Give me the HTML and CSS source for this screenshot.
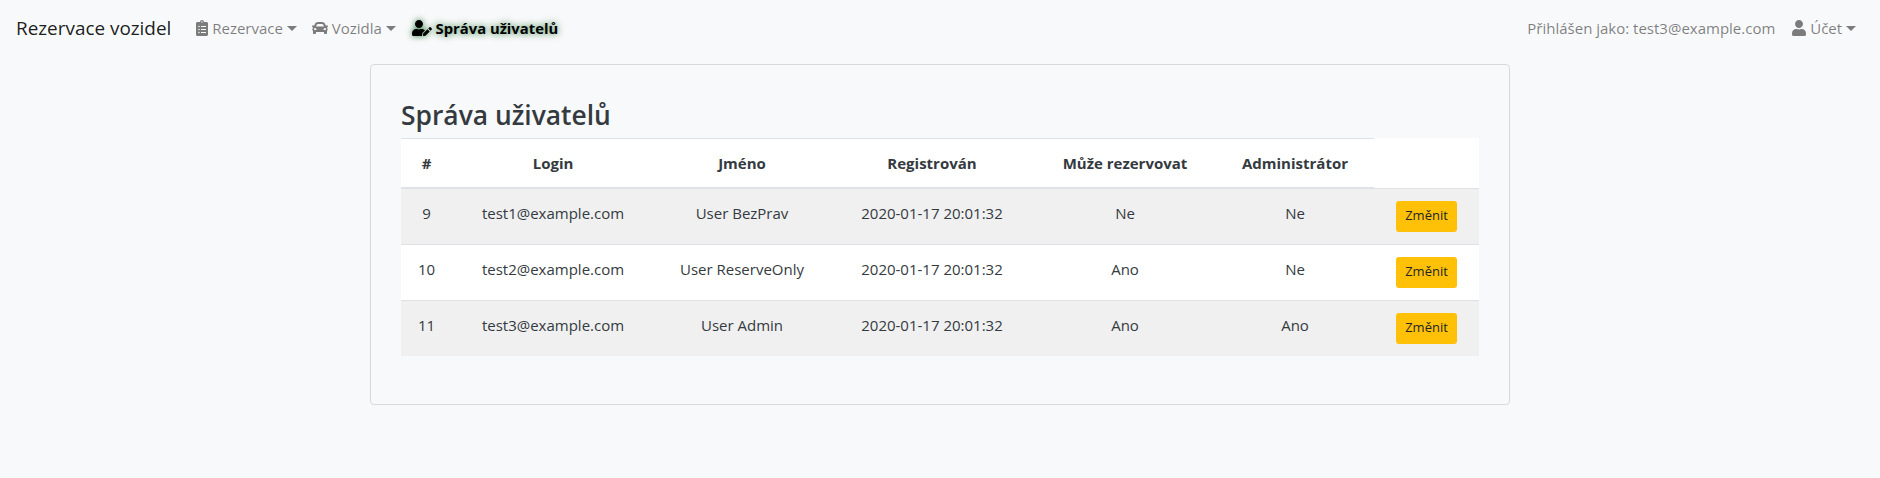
FILE: index.html
```html
<!doctype html>
<html lang="cs">
<head>
    <meta charset="UTF-8">
    <title>Rezervace vozidel</title>
    <link rel="stylesheet" href="styles.css">
</head>
<body>
<nav class="navbar">
    <a href="#" class="brand">Rezervace vozidel</a>
    <ul class="nav-list">
        <li class="nav-item">
            <a href="#" class="nav-link caret">
                <svg class="icon" width="12" height="16" viewBox="0 0 384 512"><path d="M336 64h-80c0-35.3-28.7-64-64-64s-64 28.7-64 64H48C21.5 64 0 85.5 0 112v352c0 26.5 21.5 48 48 48h288c26.5 0 48-21.5 48-48V112c0-26.5-21.5-48-48-48zM96 424c-13.3 0-24-10.7-24-24s10.7-24 24-24 24 10.7 24 24-10.7 24-24 24zm0-96c-13.3 0-24-10.7-24-24s10.7-24 24-24 24 10.7 24 24-10.7 24-24 24zm0-96c-13.3 0-24-10.7-24-24s10.7-24 24-24 24 10.7 24 24-10.7 24-24 24zm96-192c13.3 0 24 10.7 24 24s-10.7 24-24 24-24-10.7-24-24 10.7-24 24-24zm128 368c0 4.4-3.6 8-8 8H168c-4.4 0-8-3.6-8-8v-16c0-4.4 3.6-8 8-8h144c4.4 0 8 3.6 8 8v16zm0-96c0 4.4-3.6 8-8 8H168c-4.4 0-8-3.6-8-8v-16c0-4.4 3.6-8 8-8h144c4.4 0 8 3.6 8 8v16zm0-96c0 4.4-3.6 8-8 8H168c-4.4 0-8-3.6-8-8v-16c0-4.4 3.6-8 8-8h144c4.4 0 8 3.6 8 8v16z"/></svg>
                Rezervace
            </a>
        </li>
        <li class="nav-item">
            <a href="#" class="nav-link caret">
                <svg class="icon" width="16" height="16" viewBox="0 0 512 512"><path d="M499.99 176h-59.87l-16.64-41.6C406.38 91.63 365.57 64 319.5 64h-127c-46.06 0-86.88 27.63-103.99 70.4L71.87 176H12.01C4.2 176-1.53 183.34.37 190.91l6 24C7.7 220.25 12.5 224 18.01 224h20.07C24.65 235.73 16 252.78 16 272v48c0 16.12 6.16 30.67 16 41.93V416c0 17.67 14.33 32 32 32h32c17.67 0 32-14.33 32-32v-32h256v32c0 17.67 14.33 32 32 32h32c17.67 0 32-14.33 32-32v-54.07c9.84-11.25 16-25.8 16-41.93v-48c0-19.22-8.65-36.27-22.07-48H494c5.51 0 10.31-3.75 11.64-9.09l6-24c1.89-7.57-3.84-14.91-11.65-14.91zm-352.06-17.83c7.29-18.22 24.94-30.17 44.57-30.17h127c19.63 0 37.28 11.95 44.57 30.17L384 208H128l19.93-49.83zM96 319.8c-19.2 0-32-12.76-32-31.9S76.8 256 96 256s48 28.71 48 47.85-28.8 15.95-48 15.95zm320 0c-19.2 0-48 3.19-48-15.95S396.8 256 416 256s32 12.76 32 31.9-12.8 31.9-32 31.9z"/></svg>
                Vozidla
            </a>
        </li>
        <li class="nav-item">
            <a href="#" class="nav-link active">
                <svg class="icon" width="20" height="16" viewBox="0 0 640 512"><path d="M224 256c70.7 0 128-57.3 128-128S294.7 0 224 0 96 57.3 96 128s57.3 128 128 128zm89.6 32h-16.7c-22.2 10.2-46.9 16-72.9 16s-50.6-5.8-72.9-16h-16.7C60.2 288 0 348.2 0 422.4V464c0 26.5 21.5 48 48 48h274.9c-2.4-6.8-3.4-14-2.6-21.3l6.8-60.9 1.2-11.1 7.9-7.9 77.3-77.3c-24.5-27.7-60-45.5-99.9-45.5zm45.3 145.3l-6.8 61c-1.1 10.2 7.5 18.8 17.6 17.6l60.9-6.8 137.9-137.9-71.7-71.7-137.9 137.8zM633 268.9L595.1 231c-9.3-9.3-24.5-9.3-33.8 0l-37.8 37.8-4.1 4.1 71.8 71.7 41.8-41.8c9.3-9.4 9.3-24.5 0-33.9z"/></svg>
                Správa uživatelů
            </a>
        </li>
    </ul>
    <span class="nav-text">Přihlášen jako: test3@example.com</span>
    <a href="#" class="nav-link caret account">
        <svg class="icon" width="14" height="16" viewBox="0 0 448 512"><path d="M224 256c70.7 0 128-57.3 128-128S294.7 0 224 0 96 57.3 96 128s57.3 128 128 128zm89.6 32h-16.7c-22.2 10.2-46.9 16-72.9 16s-50.6-5.8-72.9-16h-16.7C60.2 288 0 348.2 0 422.4V464c0 26.5 21.5 48 48 48h352c26.5 0 48-21.5 48-48v-41.6c0-74.2-60.2-134.4-134.4-134.4z"/></svg>
        Účet
    </a>
</nav>

<main class="card">
    <h2 class="title">Správa uživatelů</h2>
    <table class="users">
        <colgroup>
            <col class="col-id">
            <col class="col-login">
            <col class="col-name">
            <col class="col-date">
            <col class="col-reserve">
            <col class="col-admin">
            <col class="col-action">
        </colgroup>
        <thead>
            <tr>
                <th>#</th>
                <th>Login</th>
                <th>Jméno</th>
                <th>Registrován</th>
                <th>Může rezervovat</th>
                <th>Administrátor</th>
            </tr>
        </thead>
        <tbody>
            <tr>
                <td>9</td>
                <td>test1@example.com</td>
                <td>User BezPrav</td>
                <td>2020-01-17 20:01:32</td>
                <td>Ne</td>
                <td>Ne</td>
                <td><a href="#" class="btn">Změnit</a></td>
            </tr>
            <tr>
                <td>10</td>
                <td>test2@example.com</td>
                <td>User ReserveOnly</td>
                <td>2020-01-17 20:01:32</td>
                <td>Ano</td>
                <td>Ne</td>
                <td><a href="#" class="btn">Změnit</a></td>
            </tr>
            <tr>
                <td>11</td>
                <td>test3@example.com</td>
                <td>User Admin</td>
                <td>2020-01-17 20:01:32</td>
                <td>Ano</td>
                <td>Ano</td>
                <td><a href="#" class="btn">Změnit</a></td>
            </tr>
        </tbody>
    </table>
</main>
</body>
</html>
```

FILE: styles.css
```css
* {box-sizing: border-box;}
body {margin: 0; background: #f8f9fa; color: #343a40; font-family: "Open Sans", "Noto Sans", sans-serif; font-size: 15px; line-height: 24px;}
a {text-decoration: none;}

.navbar {display: flex; align-items: center; height: 56px; padding: 0 16px;}
.brand {color: rgba(0,0,0,.9); font-size: 18.9px; margin-right: 17px;}
.nav-list {display: flex; flex: 1; list-style: none; margin: 0; padding: 0;}
.nav-link {display: block; padding: 8px 7px 8px 8px; color: rgba(0,0,0,.5); white-space: nowrap;}
.nav-link .icon {fill: currentColor; vertical-align: -2px;}
.nav-link.active {padding-left: 9px; color: #000; font-size: 14.8px; font-weight: 700; text-shadow: 0 0 7px #2a7a3a;}
.nav-link.active .icon {filter: drop-shadow(0 0 3px #2a7a3a);}
.nav-link.account {padding-right: 8px;}
.caret::after {content: ""; display: inline-block; vertical-align: 3px; border-top: 5px solid; border-left: 5px solid transparent; border-right: 5px solid transparent;}
.nav-text {color: rgba(0,0,0,.5); margin-right: 9px;}

.card {width: 1140px; height: 341px; margin: 8px auto 0; padding: 30px; border: 1px solid rgba(0,0,0,.125); border-radius: 4px;}
.title {margin: 3px 0 6px; font-size: 26.4px; font-weight: 600; line-height: 34px;}

.users {width: 1078px; table-layout: fixed; border-collapse: collapse; background: #fff;}
.col-id {width: 51px;}
.col-login {width: 202px;}
.col-name {width: 176px;}
.col-date {width: 204px;}
.col-reserve {width: 182px;}
.col-admin {width: 158px;}
.col-action {width: 105px;}
.users th, .users td {padding: 12px; text-align: center; vertical-align: top; border-top: 1px solid #dee2e6;}
.users th {font-weight: 700; vertical-align: bottom; border-bottom: 2px solid #dee2e6;}
.users tbody tr:nth-child(odd) {background: #f0f0f0;}
.btn {display: inline-block; width: 61px; height: 31px; background: #ffc107; color: #212529; font-size: 13px; line-height: 29px; text-align: center; border-radius: 3px;}
```
